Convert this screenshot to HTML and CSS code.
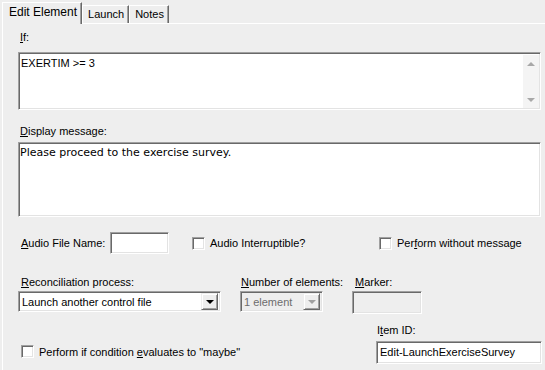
FILE: index.html
```html
<html>
<head>
    <link rel="stylesheet" href="styles.css">
</head>
<body>
    <div class="tabs">
        <div class="tab active">Edit Element</div>
        <div class="tab">Launch</div>
        <div class="tab">Notes</div>
    </div>

    <div class="panel">
        <div class="lbl if-lbl"><u>I</u>f:</div>
        <div class="memo sunken if-memo">
            <div class="memo-text">EXERTIM &gt;= 3</div>
            <div class="vscroll">
                <span class="arrow up"></span>
                <span class="arrow down"></span>
            </div>
        </div>

        <div class="lbl msg-lbl"><u>D</u>isplay message:</div>
        <div class="memo sunken msg-memo">
            <div class="memo-text msg-text">Please proceed to the exercise survey.</div>
        </div>

        <div class="row audio-row">
            <span class="lbl audio-lbl"><u>A</u>udio File Name:</span>
            <span class="edit sunken audio-edit"></span>
            <span class="check audio-int"><span class="box sunken"></span><span>Audio Interruptible?</span></span>
            <span class="check"><span class="box sunken"></span><span>Per<u>f</u>orm without message</span></span>
        </div>

        <div class="row combo-row">
            <div class="col col-recon">
                <div class="lbl"><u>R</u>econciliation process:</div>
                <div class="combo sunken">
                    <span class="combo-text">Launch another control file</span>
                    <span class="combo-btn"><span class="tri"></span></span>
                </div>
            </div>
            <div class="col col-num">
                <div class="lbl"><u>N</u>umber of elements:</div>
                <div class="combo sunken disabled">
                    <span class="combo-text">1 element</span>
                    <span class="combo-btn"><span class="tri"></span></span>
                </div>
            </div>
            <div class="col col-marker">
                <div class="lbl"><u>M</u>arker:</div>
                <div class="edit sunken disabled marker-edit"></div>
            </div>
        </div>

        <div class="row bottom-row">
            <span class="check maybe"><span class="box sunken"></span><span>Perform if condition <u>e</u>valuates to "maybe"</span></span>
            <div class="col col-item">
                <div class="lbl">I<u>t</u>em ID:</div>
                <div class="edit sunken item-edit">Edit-LaunchExerciseSurvey</div>
            </div>
        </div>
    </div>
</body>
</html>
```

FILE: styles.css
```css
body {
    margin: 0;
    width: 545px;
    height: 370px;
    overflow: hidden;
    background-color: #eeeeee;
    font-family: "Liberation Sans", Arial, sans-serif;
    font-size: 11px;
    color: #000;
}
u {
    text-decoration: underline;
    text-underline-offset: 1px;
}

/* tab strip */
.tabs {
    display: flex;
    align-items: flex-end;
    height: 23px;
    padding-left: 2px;
    position: relative;
    z-index: 1;
}
.tab {
    height: 17px;
    line-height: 17px;
    padding: 0 4px 0 5px;
    border-top: 1px solid #fff;
    border-left: 1px solid #fff;
    border-right: 1px solid #696969;
    box-shadow: inset -1px 0 0 #a0a0a0;
    background-color: #eeeeee;
}
.tab.active {
    height: 21px;
    line-height: 19px;
    padding: 0 4px 0 6px;
    margin-bottom: -1px;
    font-size: 12px;
}

/* page frame */
.panel {
    margin-left: 2px;
    height: 346px;
    border-top: 1px solid #fff;
    border-left: 1px solid #fff;
    padding-left: 15px;
}
.lbl {
    line-height: 13px;
    padding-left: 2px;
}
.sunken {
    box-sizing: border-box;
    background-color: #fff;
    border: 1px solid;
    border-color: #a0a0a0 #fff #fff #a0a0a0;
    box-shadow: inset 1px 1px 0 #696969, inset -1px -1px 0 #e3e3e3;
}

.if-lbl {
    margin-top: 7px;
}
.memo {
    width: 523px;
    position: relative;
}
.if-memo {
    margin-top: 8px;
    height: 58px;
}
.memo-text {
    padding: 4px 0 0 2px;
}
.vscroll {
    position: absolute;
    top: 2px;
    right: 1px;
    bottom: 1px;
    width: 16px;
    background-color: #f4f4f4;
    display: flex;
    flex-direction: column;
    justify-content: space-between;
    align-items: center;
    padding: 7px 0 6px;
    box-sizing: border-box;
}
.arrow {
    width: 0;
    height: 0;
    border-left: 4px solid transparent;
    border-right: 4px solid transparent;
}
.arrow.up {
    border-bottom: 4px solid #a8a8a8;
}
.arrow.down {
    border-top: 4px solid #a8a8a8;
}

.msg-lbl {
    margin-top: 15px;
}
.msg-memo {
    margin-top: 4px;
    height: 75px;
}
.msg-text {
    font-family: "DejaVu Sans", Verdana, sans-serif;
    font-size: 11px;
    padding: 3px 0 0 1px;
}

/* rows */
.row {
    display: flex;
}
.audio-row {
    margin-top: 15px;
    align-items: center;
    height: 22px;
}
.audio-lbl {
    width: 89px;
    padding-left: 3px;
}
.edit {
    height: 22px;
    padding: 4px 0 0 3px;
}
.audio-edit {
    width: 59px;
}
.check {
    display: flex;
    align-items: center;
    gap: 5px;
}
.box {
    width: 13px;
    height: 13px;
}
.audio-int {
    width: 187px;
    margin-left: 23px;
}

.combo-row {
    margin-top: 22px;
}
.col .lbl {
    margin-bottom: 2px;
}
.col-recon {
    width: 203px;
}
.col-recon .lbl {
    padding-left: 3px;
}
.col-num {
    width: 83px;
    margin-left: 19px;
}
.col-num .lbl {
    padding-left: 1px;
    white-space: nowrap;
}
.col-marker {
    width: 70px;
    margin-left: 29px;
}
.col-marker .lbl {
    padding-left: 3px;
}
.combo {
    height: 21px;
    display: flex;
    align-items: center;
    justify-content: space-between;
    padding: 2px;
}
.combo-text {
    padding-left: 1px;
}
.combo-btn {
    box-sizing: border-box;
    width: 17px;
    height: 17px;
    background-color: #eeeeee;
    border: 1px solid;
    border-color: #eeeeee #696969 #696969 #eeeeee;
    box-shadow: inset 1px 1px 0 #fff, inset -1px -1px 0 #a0a0a0;
    display: flex;
    align-items: center;
    justify-content: center;
}
.tri {
    width: 0;
    height: 0;
    border-left: 4px solid transparent;
    border-right: 4px solid transparent;
    border-top: 4px solid #000;
    margin-top: 1px;
}
.disabled {
    background-color: #eeeeee;
    color: #6d6d6d;
}
.disabled .tri {
    border-top-color: #a0a0a0;
}
.marker-edit {
    width: 70px;
    height: 23px;
}

.bottom-row {
    margin-top: 10px;
    align-items: flex-end;
}
.maybe {
    width: 355px;
    padding-left: 3px;
    margin-bottom: 6px;
}
.col-item {
    width: 166px;
}
.col-item .lbl {
    padding-left: 1px;
    margin-bottom: 4px;
}
.item-edit {
    width: 166px;
    height: 23px;
}
```
